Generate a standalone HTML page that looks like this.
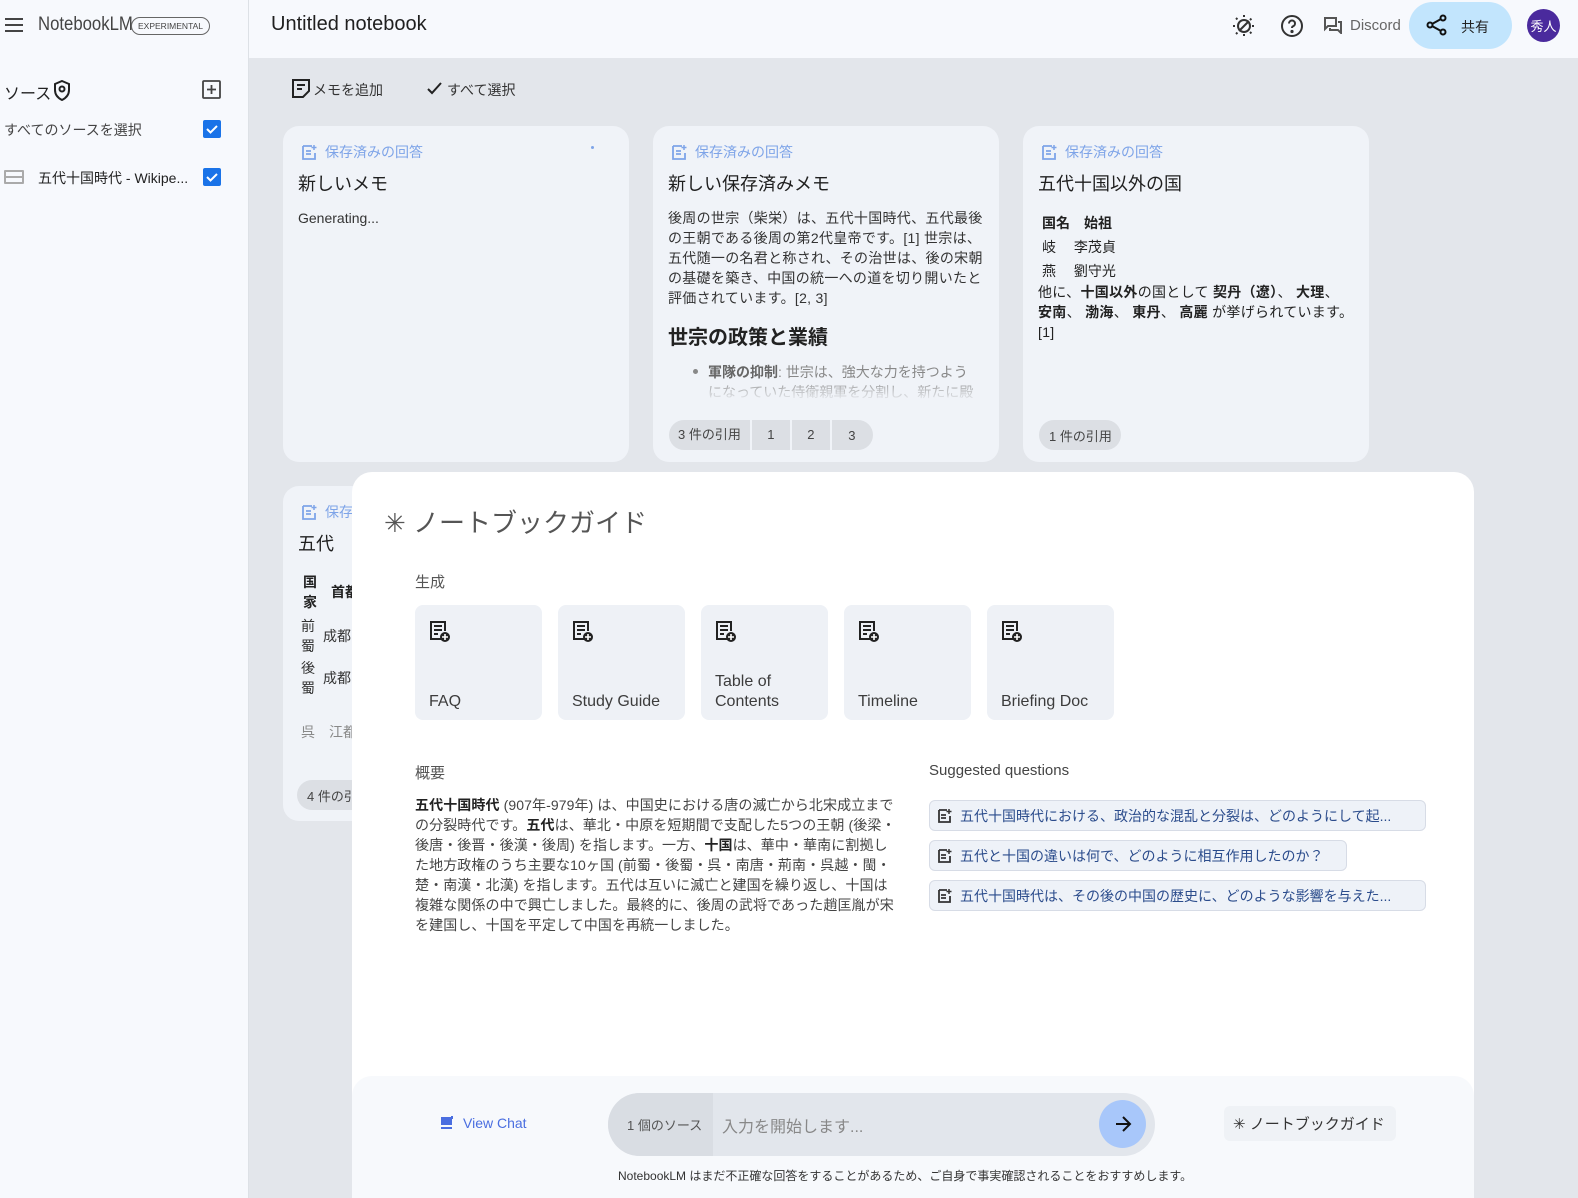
<!DOCTYPE html>
<html><head><meta charset="utf-8">
<style>
*{box-sizing:border-box;margin:0;padding:0}
body{width:1578px;height:1198px;overflow:hidden;position:relative;background:#e3e6eb;font-family:"Liberation Sans","Noto Sans CJK JP",sans-serif;color:#1f1f1f}
.abs{position:absolute}
.side{left:0;top:0;width:249px;height:1198px;background:#f7f9fd;border-right:1px solid #dde1e6}
.head{left:249px;top:0;width:1329px;height:58px;background:#f7f9fd}
.card{position:absolute;background:#f0f3f8;border-radius:16px;width:346px;overflow:hidden}
.lbl{position:absolute;left:18px;top:16px;font-size:14px;color:#7ea4e8;display:flex;align-items:center;gap:8px}
.ttl{position:absolute;left:15px;top:44px;font-size:18px;color:#1f1f1f}
.body{position:absolute;left:15px;font-size:14px;line-height:20px;color:#333}
.pill{position:absolute;height:30px;border-radius:15px;background:#dcdfe4;font-size:13px;color:#444;display:flex;align-items:center}
.gen{position:absolute;top:605px;width:127px;height:115px;background:#eef1f6;border-radius:8px}
.gen svg{position:absolute;left:14px;top:16px}
.gen span{position:absolute;left:14px;bottom:8px;font-size:16px;color:#3c3c3c;line-height:20px}
.q{position:absolute;left:929px;height:31px;border:1px solid #d7dce6;background:#eef2f8;border-radius:6px;font-size:14px;color:#2b4c8c;display:flex;align-items:center;padding-left:8px;gap:8px}
b{font-weight:bold;color:#222}
</style></head><body>
<div class="abs side"></div>
<div class="abs head"></div>
<div class="abs" style="left:5px;top:18px;width:18px;height:14px;border-top:2px solid #444;border-bottom:2px solid #444"><div style="margin-top:4px;height:2px;background:#444"></div></div>
<div class="abs" style="left:38px;top:14px;font-size:19px;color:#444;transform:scaleX(.88);transform-origin:left">NotebookLM</div>
<div class="abs" style="left:131px;top:17px;height:18px;border:1px solid #666;border-radius:9px;font-size:8.5px;padding:3px 6px;color:#444;background:#f7f9fd">EXPERIMENTAL</div>
<div class="abs" style="left:271px;top:13px;font-size:20px;color:#1f1f1f">Untitled notebook</div>
<svg class="abs" style="left:1231px;top:13px" width="26" height="26" viewBox="0 0 26 26" fill="none" stroke="#333" stroke-width="2"><circle cx="13" cy="13" r="6"/><path d="M8 18L18 8"/><path d="M13 2v3M13 21v3M2 13h3M21 13h3M5 5l2 2M19 19l2 2M5 21l2-2M19 7l2-2" stroke-dasharray="2 1"/></svg>
<svg class="abs" style="left:1280px;top:14px" width="24" height="24" viewBox="0 0 24 24" fill="none" stroke="#333" stroke-width="2"><circle cx="12" cy="12" r="10"/><path d="M9 9.5a3 3 0 1 1 4 2.8c-.8.3-1 1-1 1.7"/><circle cx="12" cy="17.5" r=".6" fill="#333"/></svg>
<svg class="abs" style="left:1324px;top:17px" width="18" height="17" viewBox="0 0 18 17" fill="none" stroke="#555" stroke-width="2"><path d="M1 1h11v8H4L1 12z"/><path d="M14 5h3v11l-3-3H6v-2"/></svg>
<div class="abs" style="left:1350px;top:17px;font-size:15px;color:#666">Discord</div>
<div class="abs" style="left:1409px;top:2px;width:103px;height:47px;border-radius:24px;background:#c2e5fd"></div>
<svg class="abs" style="left:1426px;top:14px" width="22" height="22" viewBox="0 0 22 22" fill="none" stroke="#111" stroke-width="2"><circle cx="17" cy="4" r="2.5"/><circle cx="4" cy="11" r="2.5"/><circle cx="17" cy="18" r="2.5"/><path d="M6 10l9-5M6 12l9 5"/></svg>
<div class="abs" style="left:1461px;top:17px;font-size:14px;color:#222">共有</div>
<div class="abs" style="left:1527px;top:9px;width:33px;height:33px;border-radius:50%;background:#4a2a9d;color:#fff;font-size:13px;display:flex;align-items:center;justify-content:center">秀人</div>
<div class="abs" style="left:4px;top:80px;font-size:16px;color:#222">ソース</div>
<svg class="abs" style="left:53px;top:80px" width="18" height="21" viewBox="0 0 18 21" fill="none" stroke="#222" stroke-width="2"><path d="M9 1l7 3v6c0 5-3 8-7 10C5 18 2 15 2 10V4z"/><circle cx="9" cy="9" r="2.5"/></svg>
<svg class="abs" style="left:202px;top:80px" width="19" height="19" viewBox="0 0 19 19" fill="none" stroke="#444" stroke-width="1.8"><rect x="1" y="1" width="17" height="17" rx="1"/><path d="M9.5 5v9M5 9.5h9"/></svg>
<div class="abs" style="left:4px;top:120px;font-size:14px;color:#444">すべてのソースを選択</div>
<div class="abs" style="left:203px;top:120px;width:18px;height:18px;background:#1a73e8;border-radius:2px"><svg width="18" height="18"><path d="M4 9l3.5 3.5L14 6" stroke="#fff" stroke-width="2" fill="none"/></svg></div>
<div class="abs" style="left:4px;top:170px;width:20px;height:14px;border:2px solid #aaa;border-radius:1px;background:linear-gradient(#aaa,#aaa) 0 4px/100% 2px no-repeat"></div>
<div class="abs" style="left:38px;top:168px;font-size:14px;color:#222">五代十国時代 - Wikipe...</div>
<div class="abs" style="left:203px;top:168px;width:18px;height:18px;background:#1a73e8;border-radius:2px"><svg width="18" height="18"><path d="M4 9l3.5 3.5L14 6" stroke="#fff" stroke-width="2" fill="none"/></svg></div>
<svg class="abs" style="left:292px;top:79px" width="18" height="19" viewBox="0 0 18 19" fill="none" stroke="#222" stroke-width="2"><path d="M1 1h16v11l-6 6H1z"/><path d="M5 6h8M5 10h5"/></svg>
<div class="abs" style="left:313px;top:80px;font-size:14px;color:#333">メモを追加</div>
<svg class="abs" style="left:427px;top:82px" width="16" height="13"><path d="M1 7l4 4 9-10" stroke="#222" stroke-width="2" fill="none"/></svg>
<div class="abs" style="left:447px;top:80px;font-size:14px;color:#333">すべて選択</div>
<svg width="0" height="0" style="position:absolute"><defs><symbol id="sv" viewBox="0 0 16 16"><path d="M2 2h9M2 2v13h12V9M5 7h5M5 10h5" stroke="#7ea4e8" stroke-width="1.8" fill="none"/><path d="M13 1v5M10.5 3.5h5" stroke="#7ea4e8" stroke-width="1.5"/></symbol></defs></svg>
<div class="card" style="left:283px;top:126px;height:336px">
 <div class="lbl"><svg width="16" height="16"><use href="#sv"/></svg>保存済みの回答</div>
 <div class="abs" style="left:308px;top:20px;width:3px;height:3px;border-radius:50%;background:#7ea4e8"></div>
 <div class="ttl">新しいメモ</div>
 <div class="body" style="top:82px">Generating...</div>
</div>
<div class="card" style="left:653px;top:126px;height:336px">
 <div class="lbl"><svg width="16" height="16"><use href="#sv"/></svg>保存済みの回答</div>
 <div class="ttl">新しい保存済みメモ</div>
 <div class="body" style="top:82px;width:318px;letter-spacing:.3px">後周の世宗（柴栄）は、五代十国時代、五代最後の王朝である後周の第2代皇帝です。[1] 世宗は、五代随一の名君と称され、その治世は、後の宋朝の基礎を築き、中国の統一への道を切り開いたと評価されています。[2, 3]</div>
 <div class="abs" style="left:15px;top:195px;font-size:20px;font-weight:bold;color:#222">世宗の政策と業績</div>
 <div class="body" style="top:236px;left:55px;width:270px;color:#888;height:40px;overflow:hidden;-webkit-mask:linear-gradient(#000 40%,transparent)"><b style="color:#666">軍隊の抑制</b>: 世宗は、強大な力を持つようになっていた侍衛親軍を分割し、新たに殿前軍を創設することで、軍人たちの力を抑</div>
 <div class="abs" style="left:40px;top:243px;width:5px;height:5px;border-radius:50%;background:#888"></div>
 <div class="pill" style="left:16px;top:294px;width:204px"><span style="padding:0 9px;border-right:2px solid #f0f3f8;height:30px;line-height:30px">3 件の引用</span><span style="width:40px;text-align:center;border-right:2px solid #f0f3f8;line-height:30px">1</span><span style="width:40px;text-align:center;border-right:2px solid #f0f3f8;line-height:30px">2</span><span style="width:40px;text-align:center">3</span></div>
</div>
<div class="card" style="left:1023px;top:126px;height:336px">
 <div class="lbl"><svg width="16" height="16"><use href="#sv"/></svg>保存済みの回答</div>
 <div class="ttl">五代十国以外の国</div>
 <div class="body" style="top:85px;left:19px;line-height:24px;color:#222"><b>国名　始祖</b><br>岐　 李茂貞<br>燕　 劉守光</div>
 <div class="body" style="top:156px;width:318px;color:#222;letter-spacing:.3px">他に、<b>十国以外</b>の国として <b>契丹（遼）</b>、 <b>大理</b>、 <b>安南</b>、 <b>渤海</b>、 <b>東丹</b>、 <b>高麗</b> が挙げられています。[1]</div>
 <div class="pill" style="left:16px;top:294px;width:82px;padding-left:10px">1 件の引用</div>
</div>
<div class="card" style="left:283px;top:486px;height:335px">
 <div class="lbl"><svg width="16" height="16"><use href="#sv"/></svg>保存済みの回答</div>
 <div class="ttl">五代</div>
 <div class="body" style="top:86px;left:20px;width:14px;line-height:20px"><b>国家</b></div>
 <div class="body" style="top:96px;left:48px"><b>首都</b></div>
 <div class="body" style="top:130px;left:18px;width:14px;line-height:20px">前蜀</div>
 <div class="body" style="top:140px;left:40px">成都</div>
 <div class="body" style="top:172px;left:18px;width:14px;line-height:20px">後蜀</div>
 <div class="body" style="top:182px;left:40px">成都</div>
 <div class="body" style="top:236px;left:18px;color:#888">呉　江都</div>
 <div class="pill" style="left:14px;top:294px;width:90px;padding-left:10px">4 件の引用</div>
</div>
<div class="abs" style="left:352px;top:472px;width:1122px;height:726px;background:#fff;border-radius:20px 20px 0 0;overflow:hidden">
 <div class="abs" style="left:0;top:604px;width:1122px;height:122px;background:#f7f9fc;border-radius:20px 20px 0 0"></div>
</div>
<div class="abs" style="left:384px;top:503px;font-size:26px;color:#555">✳ ノートブックガイド</div>
<div class="abs" style="left:415px;top:571px;font-size:15px;color:#555">生成</div>
<svg width="0" height="0" style="position:absolute"><defs><symbol id="gi" viewBox="0 0 22 22"><path d="M13 18H2V1h14v9" stroke="#222" stroke-width="2" fill="none"/><path d="M5 5h8M5 9h8M5 13h4" stroke="#222" stroke-width="2"/><circle cx="16" cy="16" r="5" fill="#222"/><path d="M16 13v6M13 16h6" stroke="#fff" stroke-width="1.6"/></symbol></defs></svg>
<div class="gen" style="left:415px"><svg width="22" height="22"><use href="#gi"/></svg><span>FAQ</span></div>
<div class="gen" style="left:558px"><svg width="22" height="22"><use href="#gi"/></svg><span>Study Guide</span></div>
<div class="gen" style="left:701px"><svg width="22" height="22"><use href="#gi"/></svg><span>Table of<br>Contents</span></div>
<div class="gen" style="left:844px"><svg width="22" height="22"><use href="#gi"/></svg><span>Timeline</span></div>
<div class="gen" style="left:987px"><svg width="22" height="22"><use href="#gi"/></svg><span>Briefing Doc</span></div>
<div class="abs" style="left:415px;top:762px;font-size:15px;color:#555">概要</div>
<div class="abs" style="left:415px;top:795px;width:486px;font-size:14px;line-height:20px;color:#444;letter-spacing:.1px"><b>五代十国時代</b> (907年-979年) は、中国史における唐の滅亡から北宋成立までの分裂時代です。<b>五代</b>は、華北・中原を短期間で支配した5つの王朝 (後梁・後唐・後晋・後漢・後周) を指します。一方、<b>十国</b>は、華中・華南に割拠した地方政権のうち主要な10ヶ国 (前蜀・後蜀・呉・南唐・荊南・呉越・閩・楚・南漢・北漢) を指します。五代は互いに滅亡と建国を繰り返し、十国は複雑な関係の中で興亡しました。最終的に、後周の武将であった趙匡胤が宋を建国し、十国を平定して中国を再統一しました。</div>
<div class="abs" style="left:929px;top:762px;font-size:15px;color:#444">Suggested questions</div>
<svg width="0" height="0" style="position:absolute"><defs><symbol id="qi" viewBox="0 0 14 14"><path d="M1 1h8M1 1v12h11V7M3 6h5M3 9h5" stroke="#333" stroke-width="1.8" fill="none"/><path d="M11 0v5M8.5 2.5h5" stroke="#333" stroke-width="1.5"/></symbol></defs></svg>
<div class="q" style="top:800px;width:497px"><svg width="14" height="14"><use href="#qi"/></svg>五代十国時代における、政治的な混乱と分裂は、どのようにして起...</div>
<div class="q" style="top:840px;width:418px"><svg width="14" height="14"><use href="#qi"/></svg>五代と十国の違いは何で、どのように相互作用したのか？</div>
<div class="q" style="top:880px;width:497px"><svg width="14" height="14"><use href="#qi"/></svg>五代十国時代は、その後の中国の歴史に、どのような影響を与えた...</div>
<svg class="abs" style="left:440px;top:1116px" width="13" height="15" viewBox="0 0 13 15"><rect x="1" y="1" width="11" height="8" fill="#4a6ee0"/><path d="M1 12h11" stroke="#4a6ee0" stroke-width="2"/><path d="M12 0v3" stroke="#4a6ee0" stroke-width="2"/></svg>
<div class="abs" style="left:463px;top:1115px;font-size:14px;color:#4a6ee0">View Chat</div>
<div class="abs" style="left:608px;top:1093px;width:547px;height:63px;border-radius:32px;background:#e2e6ec;overflow:hidden">
 <div class="abs" style="left:0;top:0;width:105px;height:63px;background:#d9dde3"></div>
</div>
<div class="abs" style="left:627px;top:1115px;font-size:13px;color:#555">1 個のソース</div>
<div class="abs" style="left:722px;top:1113px;font-size:16px;color:#888">入力を開始します...</div>
<div class="abs" style="left:1099px;top:1100px;width:47px;height:48px;border-radius:50%;background:#a8c7fa"></div>
<svg class="abs" style="left:1113px;top:1114px" width="20" height="20"><path d="M3 10h14M10 3l7 7-7 7" stroke="#111" stroke-width="2" fill="none"/></svg>
<div class="abs" style="left:1224px;top:1106px;width:172px;height:35px;background:#eff2f6;border-radius:6px"></div>
<div class="abs" style="left:1233px;top:1113px;font-size:15px;color:#333">✳ ノートブックガイド</div>
<div class="abs" style="left:618px;top:1167px;font-size:12px;color:#333">NotebookLM はまだ不正確な回答をすることがあるため、ご自身で事実確認されることをおすすめします。</div>
</body></html>
